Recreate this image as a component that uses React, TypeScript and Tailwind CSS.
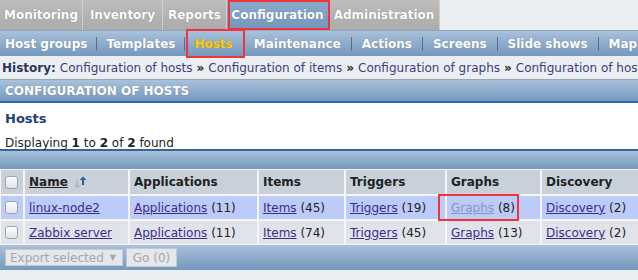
const font = { fontFamily: '"DejaVu Sans", Verdana, sans-serif' };

const tabs = [
  { label: "Monitoring", w: "w-[83px]" },
  { label: "Inventory", w: "w-[80px]" },
  { label: "Reports", w: "w-[64px]" },
  { label: "Configuration", w: "w-[102px]", active: true },
  { label: "Administration", w: "w-[111px]" },
];

const subs = ["Host groups", "Templates", "Hosts", "Maintenance", "Actions", "Screens", "Slide shows", "Maps"];

const history = [
  "Configuration of hosts",
  "Configuration of items",
  "Configuration of graphs",
  "Configuration of hosts",
];

type Row = { name: string; apps: number; items: number; triggers: number; graphs: number; disc: number; hover?: boolean };

const rows: Row[] = [
  { name: "linux-node2", apps: 11, items: 45, triggers: 19, graphs: 8, disc: 2, hover: true },
  { name: "Zabbix server", apps: 11, items: 74, triggers: 45, graphs: 13, disc: 2 },
];

function Check() {
  return <span className="inline-block h-[13px] w-[13px] rounded-[3px] border border-[#a0a4aa] bg-gradient-to-b from-[#fdfdfd] to-[#e2e4e7]" />;
}

function Link({ children, light }: { children: React.ReactNode; light?: boolean }) {
  return <span className={`underline ${light ? "text-[#8a92c4]" : "text-[#3b2c8c]"}`}>{children}</span>;
}

function SortIcon() {
  return (
    <svg width="16" height="14" viewBox="0 0 16 14" className="ml-[4px] inline-block">
      <path d="M4 5v5H1.5L5 13.5 8.5 10H6V5z" fill="#b4b8bc" />
      <path d="M10 10V5H7.5L11 1.5 14.5 5H12v5z" fill="#2e5c9c" />
    </svg>
  );
}

export default function App() {
  const cell = "flex items-center px-[4px]";
  return (
    <div className="relative h-[280px] w-[638px] overflow-hidden bg-[#eceff2] text-[12px]" style={font}>
      {/* top menu */}
      <div className="flex h-[31px] border-b border-[#8aa6c4]">
        {tabs.map((t) => (
          <div
            key={t.label}
            className={`${t.w} flex items-center justify-center border-r border-[#d0d0d0] font-bold text-white ${
              t.active ? "bg-gradient-to-b from-[#8cabcc] to-[#7496bc]" : "bg-gradient-to-b from-[#bdbdbd] to-[#ababab]"
            }`}
            style={{ textShadow: "0 0 1px rgba(0,0,0,0.35)" }}
          >
            {t.label}
          </div>
        ))}
      </div>
      {/* sub menu */}
      <div className="flex h-[25px] items-center whitespace-nowrap bg-gradient-to-b from-[#a9c1db] to-[#7598be] pl-[5px] font-bold text-white" style={{ textShadow: "0 0 1px rgba(0,0,0,0.3)" }}>
        {subs.map((s, i) => (
          <span key={s} className="flex items-center">
            {i > 0 && <span className={`${i > 2 ? "mx-[10px]" : "mx-[9px]"} h-[14px] w-px bg-[#5a6c8e]`} />}
            <span className={s === "Hosts" ? "text-[#ffcc00]" : ""}>{s}</span>
          </span>
        ))}
      </div>
      {/* history */}
      <div className="flex h-[24px] items-center whitespace-nowrap border-b border-[#9aa6b4] pl-[2px] text-[#3c3c80]">
        <span className="mr-[4px] font-bold text-[#2b3560]">History:</span>
        {history.map((h, i) => (
          <span key={i} className="flex items-center">
            {i > 0 && <span className="mx-[4px] font-bold text-[#222]">»</span>}
            <span>{h}</span>
          </span>
        ))}
      </div>
      {/* section header */}
      <div className="flex h-[23px] items-center border-b-2 border-[#35669a] bg-gradient-to-b from-[#a9c1db] to-[#7598be] pl-[5px] font-bold text-white" style={{ textShadow: "0 0 1px rgba(0,0,0,0.3)" }}>
        CONFIGURATION OF HOSTS
      </div>
      <div className="flex h-[48px] flex-col border-b-2 border-[#35669a] bg-white px-[5px] pt-[6px]">
        <div className="text-[13px] font-bold text-[#1e3f7a]">Hosts</div>
        <div className="mt-[5px] text-[#222]">
          Displaying <b>1</b> to <b>2</b> of <b>2</b> found
        </div>
      </div>
      <div className="h-[18px] bg-gradient-to-b from-[#a9c1db] to-[#7598be]" />
      {/* table */}
      <div className="grid grid-cols-[22px_103px_127px_85px_99px_93px_1fr] grid-rows-[24px_23px_23px] gap-[2px] bg-[#f3f5f7] pb-[1px] pl-[1px] pt-[1px] text-[#222]">
        <div className={`${cell} bg-[#c8d1da]`}><Check /></div>
        <div className={`${cell} bg-[#c8d1da] font-bold`}><span className="underline">Name</span><SortIcon /></div>
        {["Applications", "Items", "Triggers", "Graphs", "Discovery"].map((h) => (
          <div key={h} className={`${cell} bg-[#c8d1da] font-bold`}>{h}</div>
        ))}
        {rows.map((r) => {
          const bg = r.hover ? "bg-[#bccbf8]" : "bg-[#e0e4ea]";
          return [
            <div key={r.name + "c"} className={`${cell} ${bg}`}><Check /></div>,
            <div key={r.name + "n"} className={`${cell} ${bg}`}><Link>{r.name}</Link></div>,
            <div key={r.name + "a"} className={`${cell} ${bg}`}><Link>Applications</Link>&nbsp;({r.apps})</div>,
            <div key={r.name + "i"} className={`${cell} ${bg}`}><Link>Items</Link>&nbsp;({r.items})</div>,
            <div key={r.name + "t"} className={`${cell} ${bg}`}><Link>Triggers</Link>&nbsp;({r.triggers})</div>,
            <div key={r.name + "g"} className={`${cell} ${bg}`}><Link light={r.hover}>Graphs</Link>&nbsp;({r.graphs})</div>,
            <div key={r.name + "d"} className={`${cell} ${bg}`}><Link>Discovery</Link>&nbsp;({r.disc})</div>,
          ];
        })}
      </div>
      {/* footer */}
      <div className="flex h-[25px] items-center gap-[3px] bg-gradient-to-b from-[#a9c1db] to-[#7598be] pl-[5px]">
        <div className="flex h-[17px] w-[118px] items-center justify-between border border-[#c4c8cc] bg-[#e4e7eb] pl-[4px] pr-[6px] text-[#a6a6a6]">
          <span>Export selected</span>
          <span className="text-[8px]">▼</span>
        </div>
        <div className="flex h-[19px] w-[51px] items-center justify-center border border-[#c4c8cc] bg-[#e4e7eb] text-[#a6a6a6]">Go (0)</div>
      </div>
      {/* annotation boxes */}
      <div className="absolute left-[228px] top-0 h-[30px] w-[102px] border-2 border-[#f0343a]" />
      <div className="absolute left-[186px] top-[29px] h-[29px] w-[59px] border-2 border-[#f0343a]" />
      <div className="absolute left-[438px] top-[194px] h-[27px] w-[81px] border-2 border-[#f0343a]" />
    </div>
  );
}
